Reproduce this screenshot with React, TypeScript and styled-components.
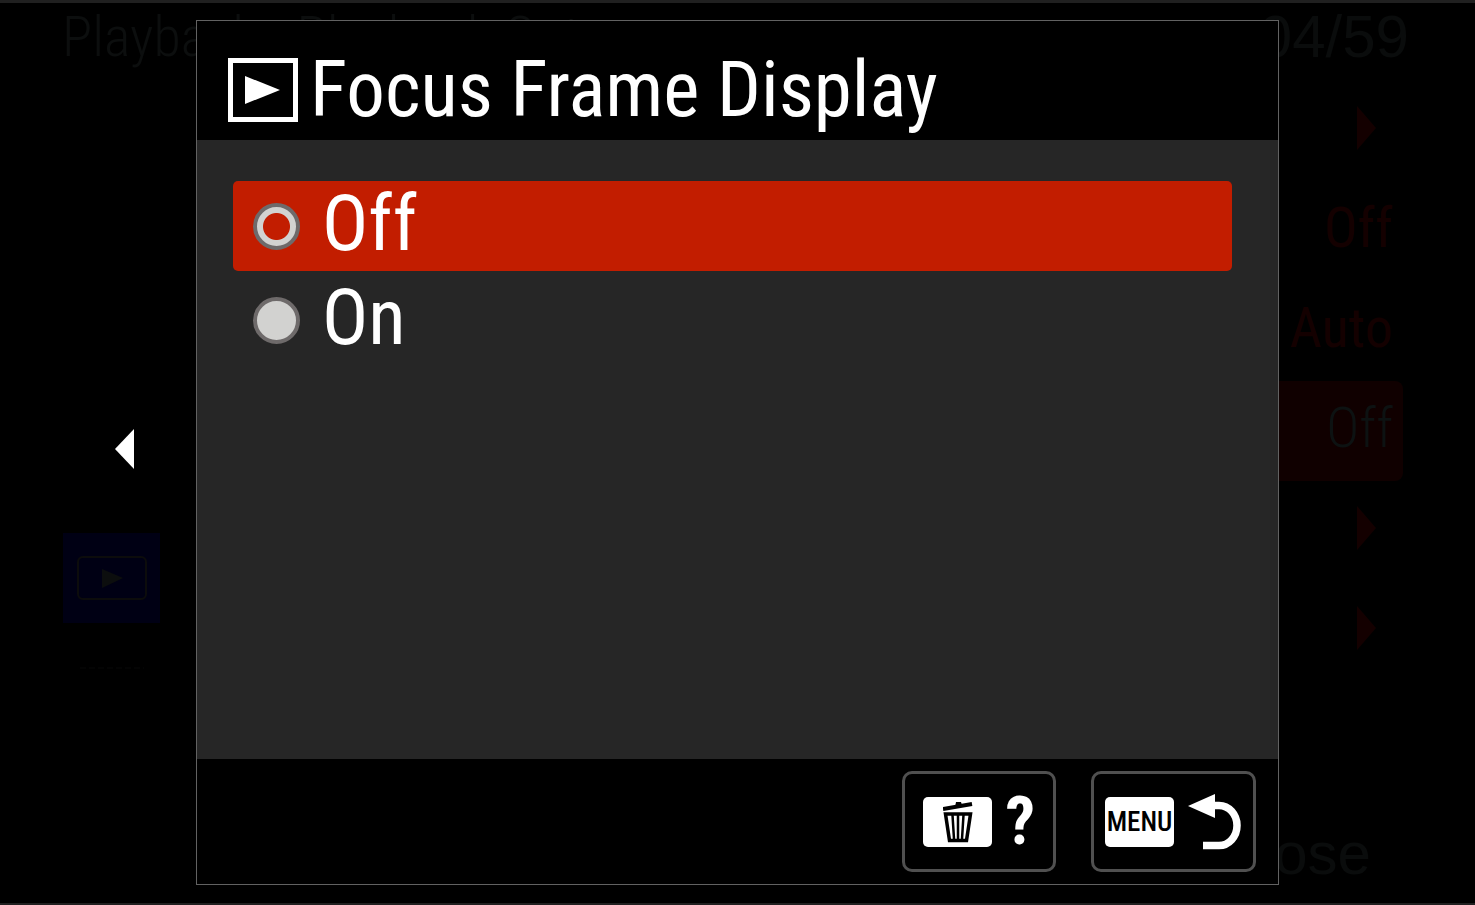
import React, { useState } from "react";
import styled, { createGlobalStyle } from "styled-components";

const GlobalStyle = createGlobalStyle`
  * { box-sizing: border-box; }
  body {
    margin: 0;
    background: #000;
    color: #fff;
    font-family: "Roboto Condensed", Roboto, "Liberation Sans", sans-serif;
  }
  button, input { font: inherit; color: inherit; margin: 0; }
`;

const Screen = styled.div`
  position: relative;
  min-height: 100vh;
  display: flex;
  flex-direction: column;
  border-top: 3px solid #202020;
  border-bottom: 2px solid #202020;
`;

const Backdrop = styled.div`
  flex: 1;
  display: flex;
  flex-direction: column;
  color: #0c0e0e;
  font-size: 56px;
  font-weight: 300;
  line-height: 68px;
`;

const PageHeader = styled.header`
  display: flex;
  justify-content: space-between;
  height: 78px;
  padding: 0 66px 0 62px;
`;

const WideText = styled.span`
  color: #0a0c0c;
  font-family: "Liberation Sans", sans-serif;
  font-size: 60px;
`;

const PageBody = styled.div`
  flex: 1;
  display: flex;
`;

const Tabs = styled.nav`
  display: flex;
  flex-direction: column;
  width: 160px;
  padding: 182px 0 0 63px;
`;

const Tab = styled.a<{ $active?: boolean }>`
  display: flex;
  align-items: center;
  justify-content: center;
  height: 90px;
  background: ${(p) => (p.$active ? "#000014" : "transparent")};
`;

const Values = styled.ul`
  flex: 1;
  margin: 0 72px 0 40px;
  padding: 0;
  list-style: none;
`;

const Value = styled.li<{ $active?: boolean }>`
  display: flex;
  align-items: center;
  justify-content: flex-end;
  height: 100px;
  padding: 0 10px 6px 0;
  border-radius: 8px;
  color: ${(p) => (p.$active ? "#0d1212" : "#140000")};
  font-weight: ${(p) => (p.$active ? 300 : 400)};
  background: ${(p) => (p.$active ? "#100000" : "transparent")};
`;

const ValueArrow = styled.svg`
  margin-right: 17px;
`;

const PageFooter = styled.footer`
  padding: 0 104px 14px 0;
  text-align: right;
`;

const Overlay = styled.div`
  position: absolute;
  inset: 0;
  display: grid;
  grid-template-columns: 196px 1fr 196px;
  padding: 17px 0 18px;
`;

const BackButton = styled.button`
  align-self: center;
  justify-self: end;
  display: flex;
  margin-right: 60px;
  padding: 0 0 8px;
  border: 0;
  background: none;
`;

const Dialog = styled.section`
  display: flex;
  flex-direction: column;
  border: 1px solid #626262;
  background: #000;
`;

const DialogHeader = styled.header`
  display: flex;
  align-items: center;
  gap: 12px;
  height: 119px;
  padding: 18px 31px 0;
`;

const Title = styled.h1`
  margin: 0;
  font-size: 77px;
  font-weight: 400;
  line-height: 96px;
  white-space: nowrap;
`;

const Options = styled.div`
  flex: 1;
  display: flex;
  flex-direction: column;
  gap: 4px;
  padding: 41px 46px 41px 36px;
  background: #262626;
`;

const Option = styled.label<{ $active: boolean }>`
  display: flex;
  align-items: center;
  gap: 22px;
  height: 90px;
  padding: 0 20px;
  border-radius: 5px;
  background: ${(p) => (p.$active ? "#c21d00" : "transparent")};
`;

const Radio = styled.input`
  appearance: none;
  width: 47px;
  height: 47px;
  border: 4px solid #6e6a6a;
  border-radius: 50%;
  background: #d2d2d0;
  &:checked {
    background: radial-gradient(circle, #c21d00 13px, #d2d2d0 14px);
  }
`;

const OptionText = styled.span`
  padding-bottom: 4px;
  font-size: 77px;
  line-height: 84px;
`;

const DialogFooter = styled.footer`
  display: flex;
  justify-content: flex-end;
  gap: 35px;
  padding: 12px 22px;
`;

const KeyButton = styled.button`
  display: flex;
  align-items: center;
  gap: 13px;
  height: 101px;
  padding: 0 12px 0 11px;
  border: 3px solid #505050;
  border-radius: 10px;
  background: #000;
`;

const HelpButton = styled(KeyButton)`
  padding: 0 18px;
`;

const KeyCap = styled.span`
  display: flex;
  align-items: center;
  justify-content: center;
  width: 69px;
  height: 50px;
  border-radius: 5px;
  background: #fff;
  color: #000;
  font-size: 27px;
  font-weight: 500;
`;

const Question = styled.span`
  font-size: 66px;
  font-weight: 700;
  line-height: 66px;
`;

const Chevron = () => (
  <ValueArrow width="20" height="44" viewBox="0 0 20 44" aria-hidden="true">
    <path d="M1 0 20 22 1 44Z" fill="#140000" />
  </ValueArrow>
);

const CHOICES = ["Off", "On"];

export default function App() {
  const [choice, setChoice] = useState("Off");

  return (
    <>
      <GlobalStyle />
      <Screen>
        <Backdrop aria-hidden="true">
          <PageHeader>
            <span>Playback - Playback Opt.</span>
            <WideText>04/59</WideText>
          </PageHeader>
          <PageBody>
            <Tabs>
              <Tab href="#network" tabIndex={-1} />
              <Tab href="#shooting" tabIndex={-1} />
              <Tab href="#exposure" tabIndex={-1} />
              <Tab href="#playback" tabIndex={-1} $active>
                <svg width="70" height="44" viewBox="0 0 70 44">
                  <rect x="1" y="1" width="68" height="42" rx="5" fill="none" stroke="#0c0c0c" strokeWidth="2" />
                  <path d="M25 13 46 22 25 32Z" fill="#0c0e0e" />
                </svg>
              </Tab>
              <Tab href="#setup" tabIndex={-1}>
                <svg width="64" height="8" viewBox="0 0 64 8">
                  <path d="M0 4H64" stroke="#080808" strokeDasharray="6 3" />
                </svg>
              </Tab>
            </Tabs>
            <Values>
              <Value><Chevron /></Value>
              <Value>Off</Value>
              <Value>Auto</Value>
              <Value $active>Off</Value>
              <Value><Chevron /></Value>
              <Value><Chevron /></Value>
            </Values>
          </PageBody>
          <PageFooter>
            <WideText>Close</WideText>
          </PageFooter>
        </Backdrop>

        <Overlay>
          <BackButton aria-label="Previous">
            <svg width="22" height="42" viewBox="0 0 22 42">
              <path d="M20 1V41L1 21Z" fill="#fff" />
            </svg>
          </BackButton>
          <Dialog role="dialog" aria-labelledby="dialog-title">
            <DialogHeader>
              <svg width="70" height="64" viewBox="0 0 70 64" aria-hidden="true">
                <rect x="2.500" y="2.500" width="65" height="59" fill="none" stroke="#fff" strokeWidth="5" />
                <path d="M17 18 52 32 17 46Z" fill="#fff" />
              </svg>
              <Title id="dialog-title">Focus Frame Display</Title>
            </DialogHeader>
            <Options role="radiogroup" aria-labelledby="dialog-title">
              {CHOICES.map((name) => (
                <Option key={name} $active={choice === name}>
                  <Radio
                    type="radio"
                    name="focus-frame"
                    checked={choice === name}
                    onChange={() => setChoice(name)}
                  />
                  <OptionText>{name}</OptionText>
                </Option>
              ))}
            </Options>
            <DialogFooter>
              <HelpButton aria-label="Help">
                <KeyCap>
                  <svg width="30" height="42" viewBox="0 0 30 42" fill="none" stroke="#000">
                    <path d="M0 8 29 3" strokeWidth="4" />
                    <path d="M12 6 13 1H18L19 4Z" fill="#000" stroke="none" />
                    <path d="M2.500 13H27.500L23.500 39.500H6.500Z" strokeWidth="3.500" />
                    <path d="M9.500 14 11 38M15 14V38M20.500 14 19 38" strokeWidth="2.500" />
                  </svg>
                </KeyCap>
                <Question>?</Question>
              </HelpButton>
              <KeyButton aria-label="Menu back">
                <KeyCap>MENU</KeyCap>
                <svg width="54" height="60" viewBox="0 0 54 60" aria-hidden="true">
                  <path d="M1 14 28 2V26Z" fill="#fff" />
                  <path d="M26 13.500H32A18 20 0 0 1 32 53.500H16" fill="none" stroke="#fff" strokeWidth="7.500" />
                </svg>
              </KeyButton>
            </DialogFooter>
          </Dialog>
        </Overlay>
      </Screen>
    </>
  );
}
